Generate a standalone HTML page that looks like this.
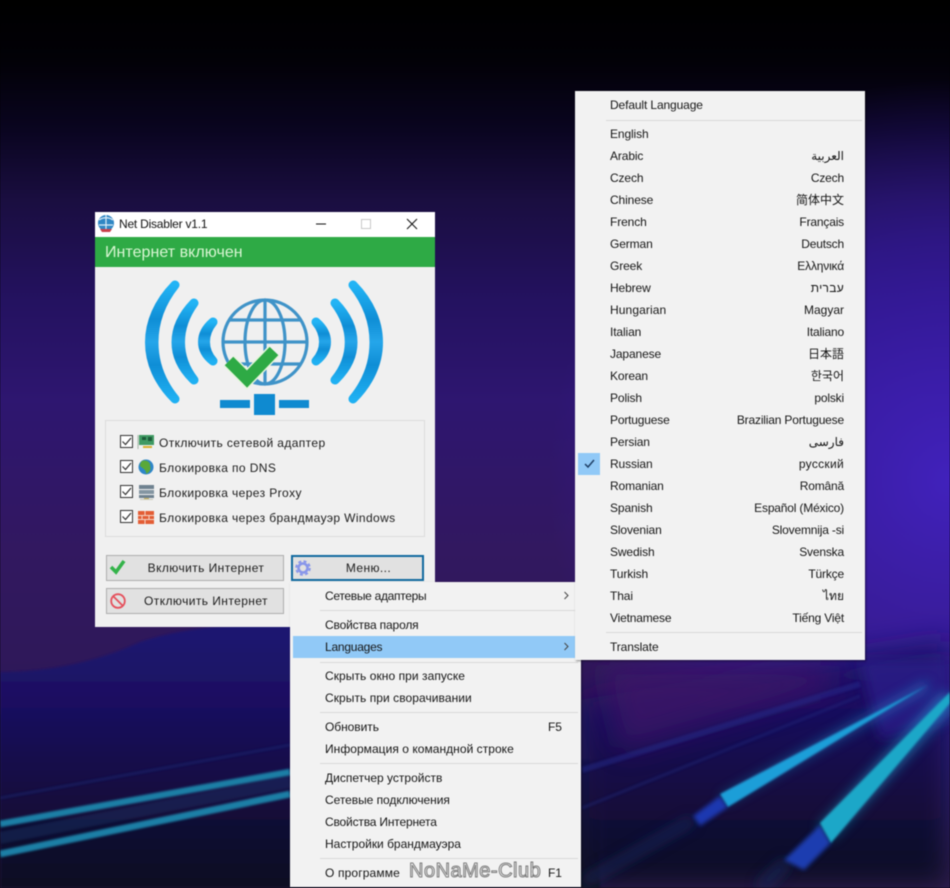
<!DOCTYPE html>
<html lang="ru"><head><meta charset="utf-8"><title>Net Disabler</title>
<style>
html,body{margin:0;padding:0;width:950px;height:888px;overflow:hidden;background:#000}
#p{position:relative;width:950px;height:888px;overflow:hidden;font:12px "Liberation Sans","DejaVu Sans","Noto Sans CJK JP",sans-serif;color:#161616;filter:blur(.4px)}
#p div{position:absolute;white-space:nowrap}
.t,.r{line-height:22px;height:22px;letter-spacing:-.12px}
.r{right:106px;text-align:right;letter-spacing:-.18px}
.s{height:1px;background:#d9d9d9}
.lb{left:159px;line-height:20px;letter-spacing:.39px;color:#1c1c1c}
.cb{left:120px;width:11px;height:11px;border:1px solid #333;background:#fff}
.btn{box-sizing:border-box;background:#e1e1e1;border:1px solid #adadad;text-align:center;line-height:25px;letter-spacing:.42px;color:#1c1c1c}
svg{position:absolute;left:0;top:0;overflow:visible}
</style></head><body><div id="p">

<svg width="950" height="888" viewBox="0 0 950 888">
<defs>
<linearGradient id="bg" gradientUnits="userSpaceOnUse" x1="0" y1="0" x2="0" y2="888">
<stop offset="0" stop-color="#000"/><stop offset=".068" stop-color="#020107"/><stop offset=".146" stop-color="#0a0520"/><stop offset=".225" stop-color="#1a0e40"/><stop offset=".338" stop-color="#241260"/><stop offset=".45" stop-color="#2e1670"/><stop offset=".62" stop-color="#321860"/><stop offset=".78" stop-color="#2e1858"/><stop offset="1" stop-color="#2e1858"/>
</linearGradient>
<radialGradient id="vio" gradientUnits="userSpaceOnUse" cx="950" cy="480" r="400"><stop offset="0" stop-color="#4222c0" stop-opacity=".95"/><stop offset=".6" stop-color="#3a1cb0" stop-opacity=".55"/><stop offset="1" stop-color="#3a1cb0" stop-opacity="0"/></radialGradient>
<linearGradient id="low" gradientUnits="userSpaceOnUse" x1="0" y1="625" x2="0" y2="888">
<stop offset="0" stop-color="#1f1672"/><stop offset=".3" stop-color="#1a1060"/><stop offset=".55" stop-color="#150c48"/><stop offset=".78" stop-color="#110a32"/><stop offset="1" stop-color="#0e0822"/>
</linearGradient>
<filter id="b1" filterUnits="userSpaceOnUse" x="-50" y="0" width="1050" height="950"><feGaussianBlur stdDeviation="1"/></filter>
<filter id="b2" filterUnits="userSpaceOnUse" x="-50" y="0" width="1050" height="950"><feGaussianBlur stdDeviation="2.2"/></filter>
<filter id="b6" filterUnits="userSpaceOnUse" x="-50" y="0" width="1050" height="950"><feGaussianBlur stdDeviation="6"/></filter>
<filter id="b14" filterUnits="userSpaceOnUse" x="-100" y="0" width="1150" height="1000"><feGaussianBlur stdDeviation="14"/></filter>
<linearGradient id="arc" x1="0" y1="0" x2="0" y2="1"><stop offset="0" stop-color="#22b4f5"/><stop offset=".3" stop-color="#0f8ed6"/><stop offset=".5" stop-color="#25a6ea"/><stop offset=".7" stop-color="#0f8ed6"/><stop offset="1" stop-color="#1fb0f2"/></linearGradient>
</defs>
<rect width="950" height="888" fill="url(#bg)"/>
<rect width="950" height="888" fill="url(#vio)"/>
<path d="M0 672C40 672 90 665 140 642C190 625 260 622 300 625V760L600 760V888H0Z" fill="url(#low)" filter="url(#b1)"/>
<path d="M580 700L950 640V888H580Z" fill="url(#low)" filter="url(#b14)"/>
<path d="M600 665H830V690L620 750Z" fill="#3c1868" opacity=".8" filter="url(#b14)"/>
<path d="M860 660H950V720L880 740Z" fill="#2a1a88" opacity=".8" filter="url(#b6)"/>
<g filter="url(#b1)">
<path d="M0 824L290 772" stroke="#1a7fa6" stroke-width="6.5"/>
<path d="M0 854L290 794" stroke="#1a7fa6" stroke-width="7"/>
<path d="M0 798L290 745" stroke="#1c2f78" stroke-width="2.5" opacity=".5"/>
<path d="M0 838L290 782" stroke="#1d3f70" stroke-width="12" opacity=".35"/>
<path d="M582 770L860 684" stroke="#1f2f90" stroke-width="6" opacity=".45"/>
<path d="M582 808L860 696" stroke="#1d2a80" stroke-width="3.5" opacity=".35"/>
</g>
<g filter="url(#b6)">
<path d="M584 882L693 820" stroke="#17295c" stroke-width="9" opacity=".8"/>
<path d="M760 888L787 862" stroke="#17295c" stroke-width="12" opacity=".7"/>
<path d="M723 800L928 685" stroke="#1f9fe0" stroke-width="8" opacity=".5"/>
<path d="M825 833L950 698" stroke="#20b0e0" stroke-width="18" opacity=".55"/>
</g>
<g filter="url(#b2)">
<path d="M693 816L720 796L728 807L700 826Z" fill="#1a38b0"/>
<path d="M784 860L820 825L831 843L804 870Z" fill="#1a3cb0"/>
</g>
<g filter="url(#b1)">
<path d="M720 794L928 685L728 807Z" fill="#1f9ed8"/>
<path d="M820 823L950 692V703L831 843Z" fill="#1ea7c8"/>
</g>
</svg>

<!-- main window -->
<div style="left:95px;top:212px;width:340px;height:415px;background:#f0f0f0"></div>
<div style="left:95px;top:212px;width:340px;height:25px;background:#fff"></div>
<svg style="left:0;top:0" width="950" height="888">
<circle cx="106" cy="223" r="8" fill="#2f87c4"/>
<path d="M99 220C103 217 109 217 113 220M106 215V230M99 225H113" stroke="#dcecf7" stroke-width="1.2" fill="none"/>
<path d="M100 229H112L110 232H102Z" fill="#c9404a"/>
<path d="M316 224H326" stroke="#111" stroke-width="1"/>
<rect x="361.5" y="219.5" width="9" height="9" fill="none" stroke="#c8c8c8"/>
<path d="M407 219L417 229M417 219L407 229" stroke="#111" stroke-width="1"/>
</svg>
<div style="left:119px;top:214px;line-height:20px;letter-spacing:-.22px;color:#111">Net Disabler v1.1</div>
<div style="left:95px;top:237px;width:340px;height:30px;background:#2eaa45"></div>
<div style="left:105px;top:238px;line-height:30px;font-size:16px;letter-spacing:.04px;color:#d9f6d3">Интернет включен</div>

<svg width="950" height="888">
<g fill="url(#arc)" stroke="url(#arc)" stroke-width="9" stroke-linejoin="round">
<path d="M175 285C141 320 141 365 175 399C147 365 147 320 175 285Z"/>
<path d="M194 303C170 328 170 357 194 380C176 357 176 328 194 303Z"/>
<path d="M213 322C199 334 199 350 213 361C203 350 203 334 213 322Z"/>
<path d="M353 285C387 320 387 365 353 399C381 365 381 320 353 285Z"/>
<path d="M335 303C359 328 359 357 335 380C354 357 354 328 335 303Z"/>
<path d="M316 322C330 334 330 350 316 361C326 350 326 334 316 322Z"/>
</g>
<g fill="none" stroke="#3f93c8" stroke-width="3.2">
<circle cx="265" cy="342" r="42"/>
<ellipse cx="265" cy="342" rx="20" ry="42"/>
<path d="M265 300V384M223 342H307M230 320H300M230 364H300"/>
</g>
<path d="M229 361L247 379L274 351" fill="none" stroke="#e6f5dc" stroke-width="15"/>
<path d="M229 361L247 379L274 351" fill="none" stroke="#2eaa45" stroke-width="12"/>
<rect x="220" y="400" width="30" height="8" fill="#0f8ad0"/>
<rect x="254" y="394" width="21" height="21" fill="#0f8ad0"/>
<rect x="279" y="400" width="30" height="8" fill="#0f8ad0"/>
</svg>

<div style="left:105px;top:420px;width:318px;height:115px;border:1px solid #dcdcdc"></div>
<div class="cb" style="top:435px"></div><div class="cb" style="top:460px"></div><div class="cb" style="top:485px"></div><div class="cb" style="top:510px"></div>
<div class="lb" style="top:433px">Отключить сетевой адаптер</div>
<div class="lb" style="top:458px">Блокировка по DNS</div>
<div class="lb" style="top:483px">Блокировка через Proxy</div>
<div class="lb" style="top:508px">Блокировка через брандмауэр Windows</div>
<svg width="950" height="888">
<g fill="none" stroke="#333" stroke-width="1.2"><path d="M122.5 441.5L125.5 444.5L131 438"/><path d="M122.5 466.5L125.5 469.5L131 463"/><path d="M122.5 491.5L125.5 494.5L131 488"/><path d="M122.5 516.5L125.5 519.5L131 513"/></g>
<rect x="139" y="435" width="15" height="10" fill="#3f9a63"/><rect x="142" y="437" width="4" height="3" fill="#1d5c3a"/><rect x="148" y="437" width="4" height="4" fill="#1d5c3a"/><path d="M138 435V449" stroke="#a8b8a8"/><rect x="143" y="446" width="9" height="2" fill="#d8b030"/>
<circle cx="146" cy="467" r="7.5" fill="#2e86c8"/><path d="M142 461C147 459 151 463 150 466C152 470 148 473 146 474C147 470 142 468 140 466C140 464 141 462 142 461Z" fill="#5aa83a"/>
<rect x="139" y="485" width="15" height="4" fill="#6f8290"/><rect x="139" y="490" width="15" height="4" fill="#8496a2"/><rect x="139" y="495" width="15" height="3" fill="#6f8290"/><rect x="144" y="498" width="5" height="2" fill="#c9b25a"/><rect x="140" y="499" width="13" height="1" fill="#c8c8b8"/>
<rect x="138" y="511" width="16" height="13" fill="#e35d35"/><path d="M138 515.5H154M138 519.5H154M145 511V515.5M149 515.5V519.5M142 515.5V519.5M145 519.5V524" stroke="#f4d5c6" stroke-width="1"/>
</svg>

<div class="btn" style="left:106px;top:555px;width:178px;height:26px;padding-left:22px">Включить Интернет</div>
<div class="btn" style="left:106px;top:588px;width:178px;height:26px;padding-left:22px">Отключить Интернет</div>
<div class="btn" style="left:291px;top:555px;width:133px;height:26px;border:2px solid #10699f;line-height:23px;padding-left:22px">Меню...</div>
<svg width="950" height="888">
<path d="M111 567L116 572L124 561" fill="none" stroke="#34b34a" stroke-width="3.6"/>
<circle cx="118" cy="601" r="6.8" fill="none" stroke="#e5505c" stroke-width="1.8"/><path d="M113 596L123 606" stroke="#e5505c" stroke-width="1.8"/>
<circle cx="303" cy="568" r="4.5" fill="none" stroke="#8896ea" stroke-width="2.6"/>
<circle cx="303" cy="568" r="6.8" fill="none" stroke="#8896ea" stroke-width="2" stroke-dasharray="3 2.4"/>
</svg>

<!-- main menu -->
<div style="left:290px;top:582px;width:291px;height:305px;background:#f2f2f2;box-shadow:1px 1px 2px rgba(0,0,0,.4)"></div>
<div style="left:293px;top:636px;width:283px;height:22px;background:#91c9f7"></div>
<div class="t" style="left:325px;top:585px;letter-spacing:-.3px">Сетевые адаптеры</div>
<div class="s" style="left:320px;top:610px;width:258px"></div>
<div class="t" style="left:325px;top:614px;letter-spacing:-.15px">Свойства пароля</div>
<div class="t" style="left:325px;top:636px;letter-spacing:-.23px">Languages</div>
<div class="s" style="left:320px;top:662px;width:258px"></div>
<div class="t" style="left:325px;top:665px;letter-spacing:.06px">Скрыть окно при запуске</div>
<div class="t" style="left:325px;top:687px;letter-spacing:.06px">Скрыть при сворачивании</div>
<div class="s" style="left:320px;top:712px;width:258px"></div>
<div class="t" style="left:325px;top:716px;letter-spacing:-.05px">Обновить</div><div class="t" style="left:548px;top:716px">F5</div>
<div class="t" style="left:325px;top:738px;letter-spacing:.04px">Информация о командной строке</div>
<div class="s" style="left:320px;top:763px;width:258px"></div>
<div class="t" style="left:325px;top:767px;letter-spacing:0">Диспетчер устройств</div>
<div class="t" style="left:325px;top:789px;letter-spacing:-.05px">Сетевые подключения</div>
<div class="t" style="left:325px;top:811px;letter-spacing:-.18px">Свойства Интернета</div>
<div class="t" style="left:325px;top:833px;letter-spacing:-.01px">Настройки брандмауэра</div>
<div class="s" style="left:320px;top:858px;width:258px"></div>
<div class="t" style="left:325px;top:862px;letter-spacing:.14px">О программе</div><div class="t" style="left:548px;top:862px">F1</div>
<div style="left:409px;top:859px;line-height:24px;font-size:20px;letter-spacing:.5px;color:#f6f6f6;-webkit-text-stroke:1px #7a7a7a">NoNaMe-Club</div>

<!-- language menu -->
<div style="left:575px;top:91px;width:290px;height:569px;background:#f2f2f2;box-shadow:1px 1px 2px rgba(0,0,0,.45)"></div>
<svg width="950" height="888">
<path d="M564.5 592L568 595.5L564.5 599M564.5 643L568 646.5L564.5 650" fill="none" stroke="#444" stroke-width="1"/>
<rect x="578" y="453" width="22" height="22" fill="#91c9f7"/>
<path d="M585 464L588 467L594 460" fill="none" stroke="#1f3f66" stroke-width="1.5"/>
</svg>
<div class="t" style="left:610px;top:94px">Default Language</div>
<div class="s" style="left:606px;top:120px;width:256px"></div>
<div class="t" style="left:610px;top:123px">English</div>
<div class="t" style="left:610px;top:145px">Arabic</div><div class="r" style="top:145px;letter-spacing:0">العربية</div>
<div class="t" style="left:610px;top:167px">Czech</div><div class="r" style="top:167px">Czech</div>
<div class="t" style="left:610px;top:189px">Chinese</div><div class="r" style="top:189px;font-family:'Noto Sans CJK SC',sans-serif;letter-spacing:0">简体中文</div>
<div class="t" style="left:610px;top:211px">French</div><div class="r" style="top:211px">Français</div>
<div class="t" style="left:610px;top:233px">German</div><div class="r" style="top:233px">Deutsch</div>
<div class="t" style="left:610px;top:255px">Greek</div><div class="r" style="top:255px">Ελληνικά</div>
<div class="t" style="left:610px;top:277px">Hebrew</div><div class="r" style="top:277px;letter-spacing:.3px">עברית</div>
<div class="t" style="left:610px;top:299px;letter-spacing:.1px">Hungarian</div><div class="r" style="top:299px;letter-spacing:0">Magyar</div>
<div class="t" style="left:610px;top:321px">Italian</div><div class="r" style="top:321px">Italiano</div>
<div class="t" style="left:610px;top:343px">Japanese</div><div class="r" style="top:343px;font-family:'Noto Sans CJK JP',sans-serif;letter-spacing:0">日本語</div>
<div class="t" style="left:610px;top:365px">Korean</div><div class="r" style="top:365px;font-family:'Noto Sans CJK KR',sans-serif;letter-spacing:0">한국어</div>
<div class="t" style="left:610px;top:387px">Polish</div><div class="r" style="top:387px">polski</div>
<div class="t" style="left:610px;top:409px;letter-spacing:-.18px">Portuguese</div><div class="r" style="top:409px">Brazilian Portuguese</div>
<div class="t" style="left:610px;top:431px">Persian</div><div class="r" style="top:431px;letter-spacing:0">فارسی</div>
<div class="t" style="left:610px;top:453px">Russian</div><div class="r" style="top:453px;letter-spacing:.3px">русский</div>
<div class="t" style="left:610px;top:475px">Romanian</div><div class="r" style="top:475px">Română</div>
<div class="t" style="left:610px;top:497px">Spanish</div><div class="r" style="top:497px">Español (México)</div>
<div class="t" style="left:610px;top:519px">Slovenian</div><div class="r" style="top:519px">Slovemnija -si</div>
<div class="t" style="left:610px;top:541px">Swedish</div><div class="r" style="top:541px">Svenska</div>
<div class="t" style="left:610px;top:563px">Turkish</div><div class="r" style="top:563px">Türkçe</div>
<div class="t" style="left:610px;top:585px">Thai</div><div class="r" style="top:585px;letter-spacing:0">ไทย</div>
<div class="t" style="left:610px;top:607px;letter-spacing:-.18px">Vietnamese</div><div class="r" style="top:607px">Tiếng Việt</div>
<div class="s" style="left:606px;top:632px;width:256px"></div>
<div class="t" style="left:610px;top:636px">Translate</div>
</div></body></html>
